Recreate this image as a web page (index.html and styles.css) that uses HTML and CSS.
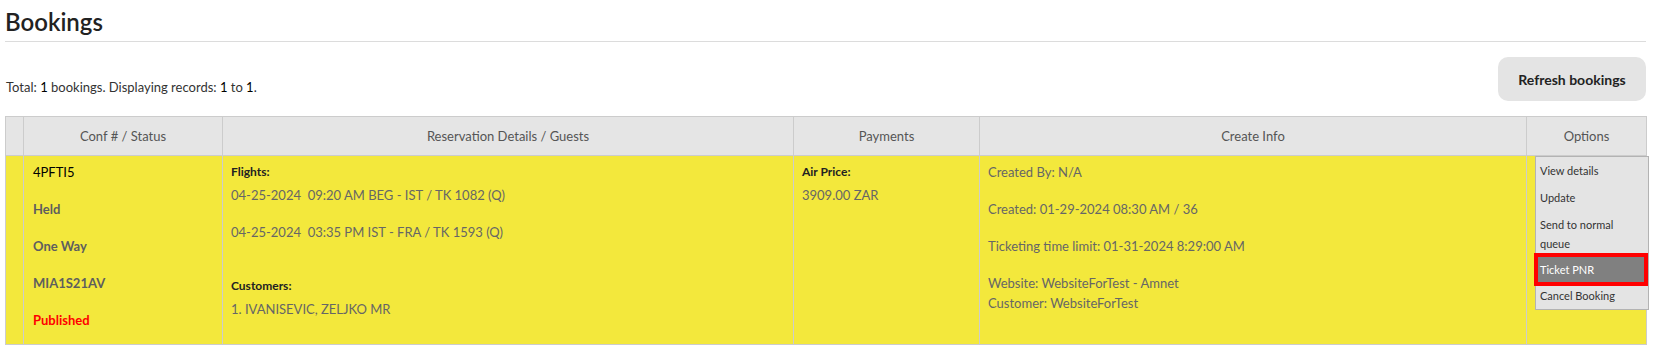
FILE: index.html
```html
<!DOCTYPE html>
<html lang="en">
<head>
    <meta charset="UTF-8">
    <meta name="viewport" content="width=device-width, initial-scale=1.0">
    <title>Bookings</title>
    <link rel="stylesheet" href="styles.css">
</head>
<body>

<div class="page">
    <h2 class="page-title">Bookings</h2>

    <div class="toolbar">
        <p class="summary">Total: <span>1</span> bookings. Displaying records: <span>1</span> to <span>1</span>.</p>
        <button type="button" class="refresh-btn">Refresh bookings</button>
    </div>

    <table class="bookings">
        <colgroup>
            <col style="width: 18px">
            <col style="width: 199px">
            <col style="width: 571px">
            <col style="width: 186px">
            <col style="width: 547px">
            <col style="width: 120px">
        </colgroup>
        <thead>
            <tr>
                <th></th>
                <th>Conf # / Status</th>
                <th>Reservation Details / Guests</th>
                <th>Payments</th>
                <th>Create Info</th>
                <th>Options</th>
            </tr>
        </thead>
        <tbody>
            <tr class="held">
                <td></td>
                <td class="status">
                    <p class="conf">4PFTI5</p>
                    <p>Held</p>
                    <p>One Way</p>
                    <p>MIA1S21AV</p>
                    <p class="published last">Published</p>
                </td>
                <td>
                    <div class="label">Flights:</div>
                    <p class="flight">04-25-2024&nbsp; 09:20 AM BEG - IST / TK 1082 (Q)</p>
                    <p class="flight">04-25-2024&nbsp; 03:35 PM IST - FRA / TK 1593 (Q)</p>
                    <div class="label customers">Customers:</div>
                    <p class="last">1. IVANISEVIC, ZELJKO MR</p>
                </td>
                <td>
                    <div class="label">Air Price:</div>
                    <p class="last">3909.00 ZAR</p>
                </td>
                <td class="info">
                    <p>Created By: N/A</p>
                    <p>Created: 01-29-2024 08:30 AM / 36</p>
                    <p>Ticketing time limit: 01-31-2024 8:29:00 AM</p>
                    <p class="last">Website: WebsiteForTest - Amnet<br>Customer: WebsiteForTest</p>
                </td>
                <td class="options">
                    <ul class="menu">
                        <li>View details</li>
                        <li>Update</li>
                        <li>Send to normal queue</li>
                        <li class="selected">Ticket PNR</li>
                        <li>Cancel Booking</li>
                    </ul>
                </td>
            </tr>
        </tbody>
    </table>
</div>

</body>
</html>
```

FILE: styles.css
```css
body {
    font-family: Lato, "Open Sans", Arial, sans-serif;
    margin: 0;
    padding: 0;
    color: #333;
    background: #fff;
}

.page {
    width: 1641px;
    padding-left: 5px;
}

.page-title {
    font-size: 24px;
    font-weight: 600;
    color: #222;
    margin: 0;
    padding-top: 7px;
    line-height: 30px;
    height: 34px;
    border-bottom: 1px solid #dcdcdc;
}

.toolbar {
    display: flex;
    justify-content: space-between;
    align-items: flex-end;
    margin-top: 15px;
}

.summary {
    margin: 0 0 6px 1px;
    font-size: 13px;
    color: #333;
}

.summary span {
    color: #000;
}

.refresh-btn {
    width: 148px;
    height: 44px;
    border: none;
    border-radius: 10px;
    background: #e4e4e4;
    font-family: inherit;
    font-size: 14px;
    font-weight: bold;
    color: #222;
    cursor: pointer;
}

.bookings {
    width: 1641px;
    table-layout: fixed;
    border-collapse: collapse;
    margin-top: 15px;
    font-size: 13px;
}

.bookings th {
    height: 38px;
    padding: 0;
    background: #e5e5e5;
    border: 1px solid #cccccc;
    font-weight: normal;
    color: #555;
    text-align: center;
}

.bookings td {
    height: 181px;
    padding: 7px 8px 0;
    vertical-align: top;
    background: #f3e83c;
    border: 1px solid #cccccc;
    color: #666;
}

.bookings p {
    margin: 0 0 17.5px;
    line-height: 19.5px;
}

.bookings p.last {
    margin-bottom: 0;
}

.status {
    font-weight: bold;
}

.bookings td.status {
    padding-left: 9px;
}

.status p {
    color: #5e5e5e;
}

.status .conf {
    color: #000;
    font-weight: normal;
}

.status .published {
    color: #ff0000;
}

.label {
    font-size: 12px;
    font-weight: bold;
    color: #222;
    line-height: 19.5px;
    margin: -1px 0 4px;
}

.flight {
    margin-bottom: 17px;
}

.label.customers {
    margin-top: 34px;
}

.options {
    position: relative;
}

.menu {
    position: absolute;
    top: 0;
    left: 8px;
    width: 112px;
    margin: 0;
    padding: 0;
    list-style: none;
    background: #e4e4e4;
    border: 1px solid #b3b3b3;
    font-size: 11px;
    color: #333;
}

.menu li {
    padding: 4px 4px;
    line-height: 19px;
}

.menu li.selected {
    margin: 0 4px 0 2px;
    padding: 3px 2px;
    background: #808080;
    color: #fff;
    outline: 4px solid #ff0000;
}
```
